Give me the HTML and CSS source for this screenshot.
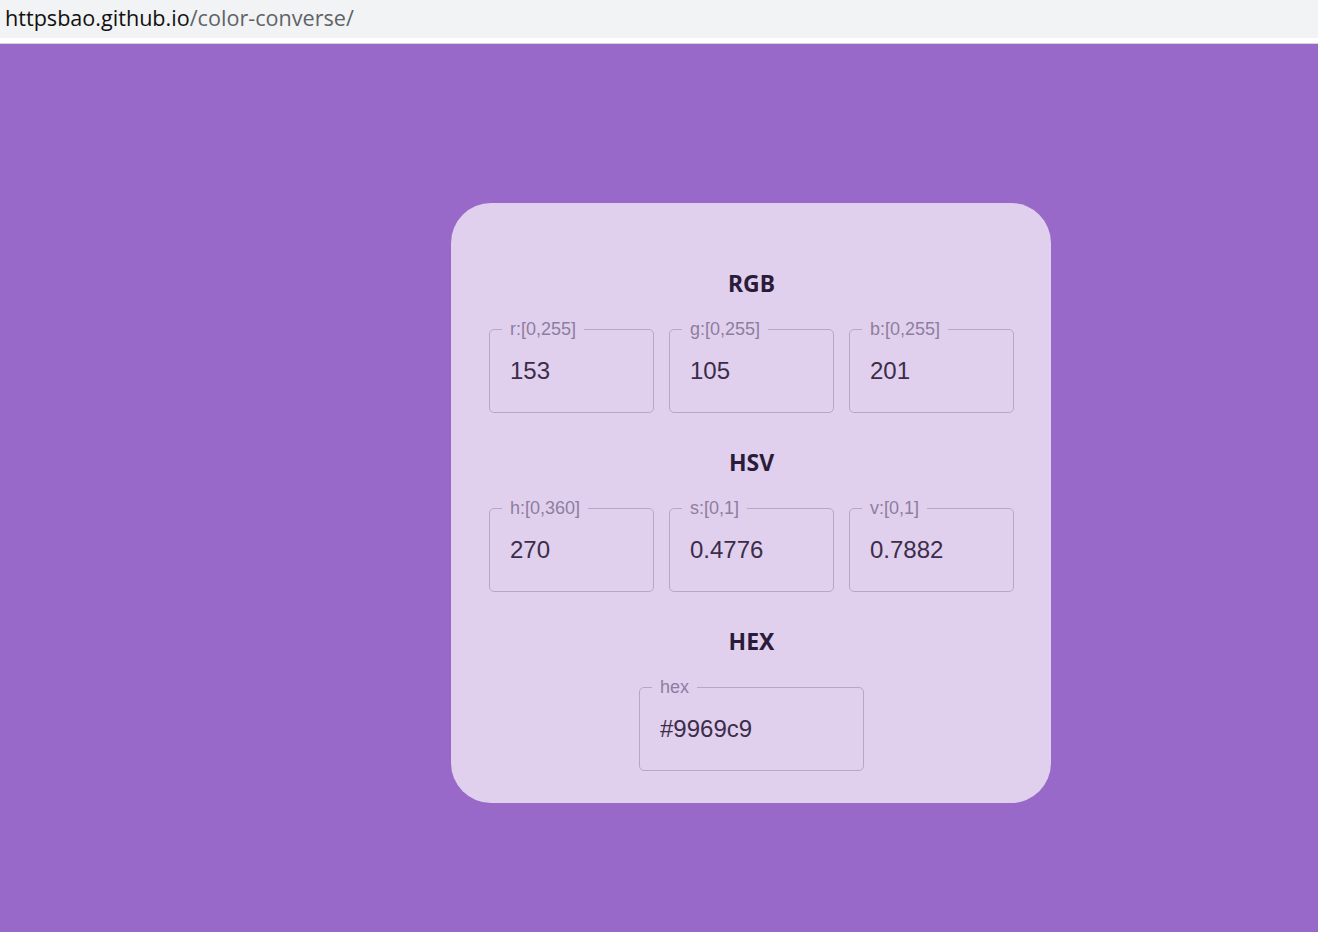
FILE: index.html
```html
<!DOCTYPE html>
<html lang="en">
<head>
<meta charset="utf-8">
<title>color-converse</title>
<link rel="stylesheet" href="styles.css">
</head>
<body>
<div class="urlbar"><span class="host">httpsbao.github.io</span><span class="path">/color-converse/</span></div>
<div class="urlgap"></div>
<main class="stage">
  <section class="card">
    <h2 class="title">RGB</h2>
    <div class="row">
      <fieldset class="field"><legend>r:[0,255]</legend><input class="value" value="153"></fieldset>
      <fieldset class="field"><legend>g:[0,255]</legend><input class="value" value="105"></fieldset>
      <fieldset class="field"><legend>b:[0,255]</legend><input class="value" value="201"></fieldset>
    </div>
    <h2 class="title">HSV</h2>
    <div class="row">
      <fieldset class="field"><legend>h:[0,360]</legend><input class="value" value="270"></fieldset>
      <fieldset class="field"><legend>s:[0,1]</legend><input class="value" value="0.4776"></fieldset>
      <fieldset class="field"><legend>v:[0,1]</legend><input class="value" value="0.7882"></fieldset>
    </div>
    <h2 class="title">HEX</h2>
    <div class="row">
      <fieldset class="field wide"><legend>hex</legend><input class="value" value="#9969c9"></fieldset>
    </div>
  </section>
</main>
</body>
</html>
```

FILE: styles.css
```css
html, body {
  margin: 0;
  padding: 0;
}
body {
  background: #9969c9;
  font-family: "Liberation Sans", Arial, sans-serif;
  height: 932px;
  overflow: hidden;
}
.urlbar {
  height: 38px;
  background: #f1f3f4;
  font-family: "Open Sans", "Noto Sans", sans-serif;
  font-size: 21.6px;
  line-height: 35px;
  padding-left: 5px;
  box-sizing: border-box;
}
.host { color: #111; }
.path { color: #5f6368; }
.urlgap {
  height: 5px;
  background: #fff;
  border-bottom: 1px solid #d6d6d6;
}
.stage {
  padding: 159px 0 0 451px;
}
.card {
  width: 600px;
  height: 600px;
  box-sizing: border-box;
  background: #e0d0ee;
  border-radius: 40px;
  padding: 60px 37px 0 38px;
}
.title {
  margin: 0 0 17px;
  height: 40px;
  line-height: 40px;
  text-align: center;
  font-family: "Noto Sans", "Open Sans", sans-serif;
  font-weight: 700;
  font-size: 23px;
  color: #2b1b3a;
}
.row {
  display: flex;
  justify-content: center;
  gap: 15px;
  margin-bottom: 29px;
}
.field {
  width: 165px;
  box-sizing: border-box;
  margin: 0;
  border: 1px solid #b8a5c9;
  border-radius: 5px;
  padding: 0 12px 16px;
  min-width: 0;
}
.field.wide {
  width: 225px;
}
.field legend {
  padding: 0 8px;
  font-size: 18px;
  line-height: 18px;
  color: #8e7e9e;
}
.value {
  display: block;
  width: 100%;
  box-sizing: border-box;
  margin-top: 8px;
  height: 50px;
  padding: 0 8px;
  border: none;
  background: transparent;
  outline: none;
  font-family: "Liberation Sans", Arial, sans-serif;
  font-size: 24px;
  color: #3b2d49;
}
```
